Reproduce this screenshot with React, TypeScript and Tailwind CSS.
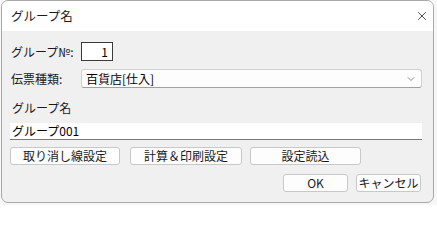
import { X, ChevronDown } from 'lucide-react';

const font = { fontFamily: '"Noto Sans CJK JP", "Noto Sans", sans-serif' };

function PushButton({ label, className }: { label: string; className: string }) {
  return (
    <button
      type="button"
      className={`flex h-[18px] items-center justify-center rounded-[3px] border border-[#c8c8c8] bg-[#fdfdfd] text-[12px] leading-none text-[#1a1a1a] ${className}`}
    >
      {label}
    </button>
  );
}

export default function App() {
  return (
    <div className="h-[205px] w-[437px] overflow-hidden bg-[#f7f7f7]" style={font}>
      <div className="ml-px flex h-[203px] w-[433px] flex-col overflow-hidden rounded-[7px] border border-[#a8a8a8] bg-[#f0f0f0]">
        <div className="flex h-[30px] shrink-0 items-center justify-between bg-white pl-[9px] pr-[4px]">
          <span className="text-[12.5px] leading-none text-[#1a1a1a]">グループ名</span>
          <X className="h-[14px] w-[14px] text-black" strokeWidth={1.2} />
        </div>

        <div className="flex flex-col pl-[8px] pr-[11px] pt-[11px]">
          <div className="flex h-[19px] items-center">
            <span className="w-[71px] pl-px text-[12px] leading-none text-[#1a1a1a]">グループ№:</span>
            <div className="flex h-[19px] w-[32px] items-center justify-end border border-[#3a3a3a] bg-white pr-[4px] text-[12px] leading-none">
              1
            </div>
          </div>

          <div className="mt-[8px] flex h-[19px] items-center">
            <span className="w-[71px] pl-px text-[12px] leading-none text-[#1a1a1a]">伝票種類:</span>
            <div className="flex h-[19px] flex-1 items-center justify-between rounded-[3px] border border-[#d0d0d0] border-b-[#a0a0a0] bg-[#fdfdfd] pl-[4px] pr-[4px] text-[12px] leading-none">
              <span>百貨店[仕入]</span>
              <ChevronDown className="h-[12px] w-[12px] text-[#555]" strokeWidth={1.3} />
            </div>
          </div>

          <span className="mt-[11px] pl-[2px] text-[12px] leading-[18px] text-[#1a1a1a]">グループ名</span>

          <div className="mt-[6px] flex h-[17px] items-center border-b border-[#7a7a7a] bg-white pl-[2px] text-[12px] leading-none">
            グループ001
          </div>

          <div className="mt-[7px] flex">
            <PushButton label="取り消し線設定" className="w-[110px]" />
            <PushButton label="計算＆印刷設定" className="ml-[10px] w-[112px]" />
            <PushButton label="設定読込" className="ml-[8px] w-[111px]" />
          </div>

          <div className="mt-[9px] flex justify-end gap-[8px] pr-[1px]">
            <PushButton label="OK" className="h-[17px] w-[65px]" />
            <PushButton label="キャンセル" className="h-[17px] w-[65px]" />
          </div>
        </div>
      </div>
    </div>
  );
}
